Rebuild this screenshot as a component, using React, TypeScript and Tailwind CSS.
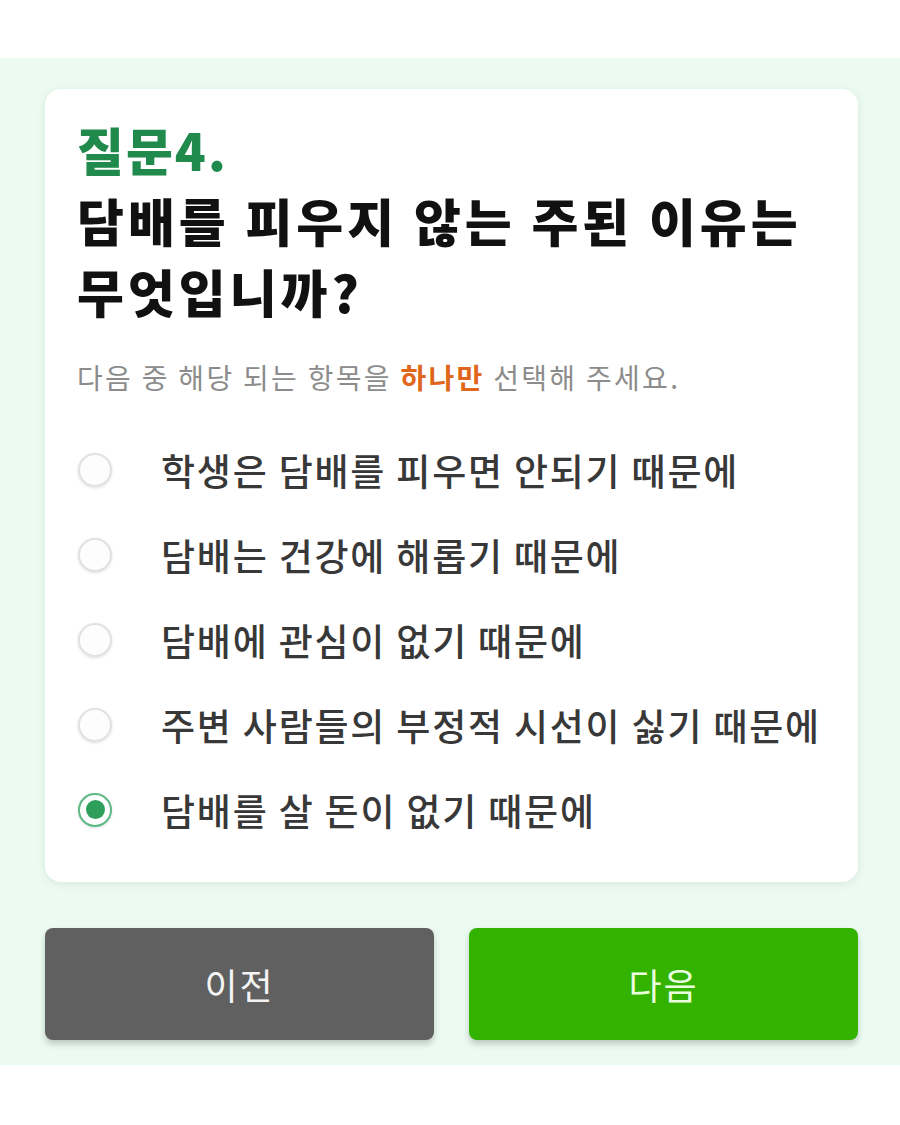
import React from "react";

const options = [
  "학생은 담배를 피우면 안되기 때문에",
  "담배는 건강에 해롭기 때문에",
  "담배에 관심이 없기 때문에",
  "주변 사람들의 부정적 시선이 싫기 때문에",
  "담배를 살 돈이 없기 때문에",
];

export default function App() {
  const selected = 4;
  return (
    <div
      className="w-[900px] h-[1125px] bg-white pt-[58px]"
      style={{ fontFamily: '"Noto Sans CJK KR", "Noto Sans", sans-serif' }}
    >
      <div className="bg-[#ebfbf2] pl-[45px] pr-[42px] pt-[31px] pb-[25px]">
        <div className="bg-white rounded-[16px] shadow-[0_2px_10px_rgba(0,0,0,0.08)] pl-[32px] pr-[10px] pt-[25px] pb-[30px]">
          <div className="text-[51px] leading-[71px] font-black tracking-[4px]">
            <div className="text-[#1f8a4c] tracking-[2px]">질문4.</div>
            <div className="text-[#111111] whitespace-nowrap">담배를 피우지 않는 주된 이유는</div>
            <div className="text-[#111111]">무엇입니까?</div>
          </div>
          <div className="mt-[30px] text-[28px] leading-[40px] text-[#8c8c8c] tracking-[2.3px] whitespace-nowrap">
            다음 중 해당 되는 항목을 <span className="font-bold text-[#e0661c]">하나만</span> 선택해 주세요.
          </div>
          <div className="mt-[30px] flex flex-col">
            {options.map((o, i) => (
              <div key={i} className="h-[85px] flex items-center">
                <div className="w-[34px] h-[34px] ml-[1px] shrink-0 flex items-center justify-center">
                  {i === selected ? (
                    <div className="w-[34px] h-[34px] rounded-full border-[2px] border-[#5cb884] bg-white flex items-center justify-center shadow-[0_1px_3px_rgba(0,0,0,0.12)]">
                      <div className="w-[19px] h-[19px] rounded-full bg-[#2e9e5b]" />
                    </div>
                  ) : (
                    <div className="w-[34px] h-[34px] rounded-full border-[2px] border-[#e2e2e2] bg-[#fdfdfd] shadow-[0_1px_3px_rgba(0,0,0,0.12)]" />
                  )}
                </div>
                <div className="ml-[49px] text-[37px] leading-[44px] text-[#383838] font-medium tracking-[1.8px] whitespace-nowrap">
                  {o}
                </div>
              </div>
            ))}
          </div>
        </div>
        <div className="mt-[46px] flex gap-[35px]">
          <button className="flex-1 h-[112px] rounded-[8px] bg-[#606060] text-[#f4f4f4] text-[36px] tracking-[2px] shadow-[0_4px_6px_rgba(0,0,0,0.2)]">
            이전
          </button>
          <button className="flex-1 h-[112px] rounded-[8px] bg-[#33b300] text-[#eaffdf] text-[36px] tracking-[2px] shadow-[0_4px_6px_rgba(0,0,0,0.2)]">
            다음
          </button>
        </div>
      </div>
    </div>
  );
}
